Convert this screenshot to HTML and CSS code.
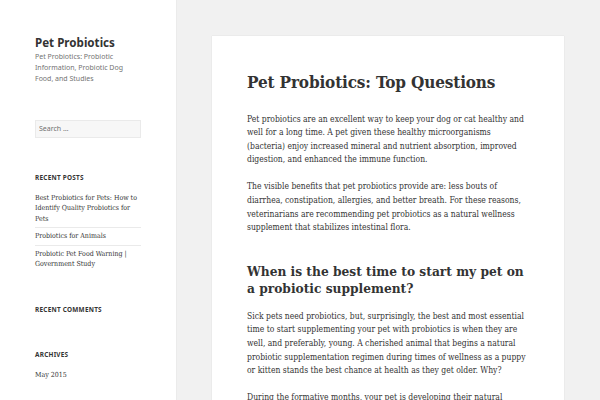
FILE: index.html
```html
<!DOCTYPE html>
<html lang="en">
<head>
<meta charset="utf-8">
<title>Pet Probiotics: Top Questions</title>
<link rel="stylesheet" href="styles.css">
</head>
<body>
<div class="page">
  <aside class="sidebar">
    <header class="site-header">
      <p class="site-title"><a href="#">Pet Probiotics</a></p>
      <p class="site-description">Pet Probiotics: Probiotic Information, Probiotic Dog Food, and Studies</p>
    </header>
    <section class="widget widget-search">
      <form class="search-form">
        <input class="search-field" type="search" placeholder="Search …">
      </form>
    </section>
    <section class="widget">
      <h2 class="widget-title">Recent Posts</h2>
      <ul class="widget-list">
        <li><a href="#">Best Probiotics for Pets: How to Identify Quality Probiotics for Pets</a></li>
        <li><a href="#">Probiotics for Animals</a></li>
        <li><a href="#">Probiotic Pet Food Warning | Government Study</a></li>
      </ul>
    </section>
    <section class="widget">
      <h2 class="widget-title">Recent Comments</h2>
    </section>
    <section class="widget">
      <h2 class="widget-title">Archives</h2>
      <ul class="widget-list">
        <li><a href="#">May 2015</a></li>
      </ul>
    </section>
  </aside>
  <main class="content">
    <article class="card">
      <h1 class="entry-title">Pet Probiotics: Top Questions</h1>
      <div class="entry-content">
        <p>Pet probiotics are an excellent way to keep your dog or cat healthy and well for a long time. A pet given these healthy microorganisms (bacteria) enjoy increased mineral and nutrient absorption, improved digestion, and enhanced the immune function.</p>
        <p>The visible benefits that pet probiotics provide are: less bouts of diarrhea, constipation, allergies, and better breath. For these reasons, veterinarians are recommending pet probiotics as a natural wellness supplement that stabilizes intestinal flora.</p>
        <h2>When is the best time to start my pet on a probiotic supplement?</h2>
        <p>Sick pets need probiotics, but, surprisingly, the best and most essential time to start supplementing your pet with probiotics is when they are well, and preferably, young. A cherished animal that begins a natural probiotic supplementation regimen during times of wellness as a puppy or kitten stands the best chance at health as they get older. Why?</p>
        <p>During the formative months, your pet is developing their natural intestinal flora, which will protect them for the rest of their lives.</p>
      </div>
    </article>
  </main>
</div>
</body>
</html>
```
FILE: styles.css
```css
html, body {
  margin: 0;
  padding: 0;
  overflow: hidden;
}
body {
  background: #f1f1f1;
  color: #333333;
  font-family: "DejaVu Serif Condensed", "DejaVu Serif", serif;
}
a {
  color: #333333;
  text-decoration: none;
}
.page {
  display: flex;
  align-items: stretch;
  min-height: 400px;
}
.sidebar {
  width: 176px;
  flex: 0 0 176px;
  background: #ffffff;
  box-shadow: 0 0 1px rgba(0, 0, 0, 0.15);
  padding: 35px 35px 0;
  box-sizing: border-box;
}
.site-header {
  margin-bottom: 35px;
}
.site-title {
  margin: 0;
  font-family: "Noto Sans", sans-serif;
  font-weight: 700;
  font-size: 11.6px;
  line-height: 15px;
}
.site-description {
  margin: 1px 0 0;
  font-family: "Noto Sans", sans-serif;
  font-size: 7px;
  line-height: 11.2px;
  color: #737373;
}
.widget {
  margin-bottom: 35px;
}
.search-field {
  display: block;
  width: 100%;
  height: 18px;
  box-sizing: border-box;
  margin: 0;
  padding: 0 3px;
  background: #f7f7f7;
  border: 1px solid #eaeaea;
  border-radius: 0;
  font-family: "Noto Sans", sans-serif;
  font-size: 7px;
  color: #333333;
  outline: none;
}
.search-field::placeholder {
  color: #707070;
}
.widget-title {
  margin: 0 0 10px;
  font-family: "Noto Sans", sans-serif;
  font-weight: 700;
  font-size: 6.4px;
  line-height: 10px;
  letter-spacing: 0.04em;
  text-transform: uppercase;
}
.widget-list {
  list-style: none;
  margin: 0;
  padding: 0;
  font-size: 7px;
  line-height: 10.5px;
}
.widget-list li {
  padding: 3px 0;
  border-top: 1px solid #eaeaea;
}
.widget-list li:first-child {
  border-top: 0;
  padding-top: 0;
}
.widget-list li:last-child {
  padding-bottom: 0;
}
.content {
  flex: 1;
  padding: 36px 36px 0 36px;
}
.card {
  background: #ffffff;
  box-shadow: 0 0 1px rgba(0, 0, 0, 0.15);
  padding: 34px 35px 20px;
}
.entry-title {
  margin: 0 0 18.5px;
  font-size: 17px;
  line-height: 24px;
  letter-spacing: -0.15px;
  font-weight: 700;
}
.entry-content {
  font-size: 8.5px;
  line-height: 13.6px;
}
.entry-content p {
  margin: 0 0 13.6px;
}
.entry-content h2 {
  margin: 28px 0 13px;
  font-size: 13.6px;
  line-height: 17px;
  font-weight: 700;
}
```
